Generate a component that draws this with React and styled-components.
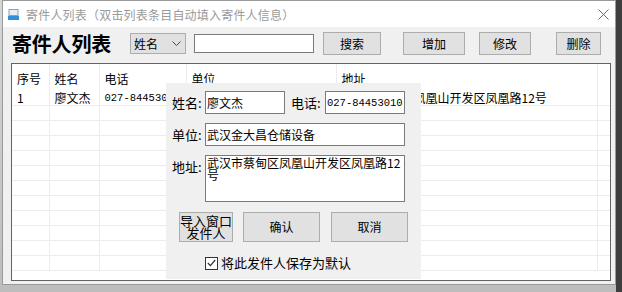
import React from 'react'
import styled, { createGlobalStyle } from 'styled-components'

const Global = createGlobalStyle`
  html, body {
    margin: 0;
    padding: 0;
    background: #cfcfcf;
    overflow: hidden;
  }
  body {
    font-family: "Noto Sans CJK SC", "Microsoft YaHei", sans-serif;
    font-size: 12px;
    color: #000;
  }
`

const mono = '"Liberation Mono", "Noto Sans CJK SC", monospace'

const Desktop = styled.div`
  width: 622px;
  height: 292px;
  display: flex;
  background: linear-gradient(#d6d6d6, #bdbdbd);
`

const Window = styled.div`
  margin-left: 2px;
  width: 614px;
  height: 285px;
  box-sizing: border-box;
  border: 1px solid #9a9a9a;
  background: #f0f0f0;
  display: flex;
  flex-direction: column;
`

const RightStrip = styled.div`
  flex: 1;
  height: 292px;
  background: #3e3e3e;
`

const TitleBar = styled.div`
  height: 26px;
  background: #fff;
  display: flex;
  align-items: center;
  padding-left: 5px;
  gap: 7px;
  color: #9a9a9a;
  font-size: 12px;
  line-height: 14px;
`

const TitleText = styled.span`
  flex: 1;
  margin-top: 1px;
  letter-spacing: 0.2px;
`

const Close = styled.svg`
  margin-right: 6px;
`

const Body = styled.div`
  flex: 1;
  display: flex;
  flex-direction: column;
  padding: 5px 4px 3px 8px;
`

const Toolbar = styled.div`
  display: flex;
  align-items: center;
  height: 23px;
`

const Heading = styled.h1`
  margin: 0 0 0 1px;
  width: 118px;
  font-size: 20px;
  font-weight: bold;
  line-height: 23px;
  letter-spacing: -0.2px;
`

const Select = styled.div`
  width: 56px;
  height: 21px;
  box-sizing: border-box;
  border: 1px solid #adadad;
  background: #e1e1e1;
  display: flex;
  align-items: center;
  justify-content: space-between;
  padding: 0 4px 0 3px;
  font-size: 12px;
`

const SearchBox = styled.div`
  margin-left: 8px;
  width: 120px;
  height: 19px;
  box-sizing: border-box;
  border: 1px solid #7a7a7a;
  background: #fff;
`

const Button = styled.button`
  margin-left: ${p => p.$ml || 0}px;
  width: ${p => p.$w}px;
  height: ${p => p.$h || 23}px;
  box-sizing: border-box;
  border: 1px solid #adadad;
  background: #e1e1e1;
  font-family: inherit;
  font-size: ${p => p.$fs || 12}px;
  line-height: ${p => p.$lh || 14}px;
  padding: 0;
  color: #000;
`

const TableWrap = styled.div`
  position: relative;
  margin-top: 8px;
  width: 600px;
  height: 218px;
  box-sizing: border-box;
  border: 1px solid #646464;
  background: #fff;
  overflow: hidden;
`

const Grid = styled.table`
  border-collapse: collapse;
  table-layout: fixed;
  width: 598px;
`

const HeadCell = styled.th`
  height: 26px;
  padding: 2px 0 0 5px;
  box-sizing: border-box;
  text-align: left;
  font-weight: normal;
  font-size: 12px;
  border-right: 1px solid #ececec;
  white-space: nowrap;
  overflow: hidden;
`

const Cell = styled.td`
  height: 15px;
  padding: 1px 0 0 5px;
  box-sizing: border-box;
  line-height: 14px;
  border-right: 1px solid #ececec;
  border-bottom: 1px solid #ececec;
  white-space: nowrap;
  overflow: hidden;
  font-family: ${p => (p.$mono ? mono : 'inherit')};
  font-size: ${p => (p.$mono ? 10.5 : 12)}px;
`

const Popup = styled.div`
  position: absolute;
  left: 154px;
  top: 19px;
  width: 255px;
  height: 196px;
  box-sizing: border-box;
  background: #f0f0f0;
  padding: 8px 0 0 6px;
  display: flex;
  flex-direction: column;
`

const FieldRow = styled.div`
  display: flex;
  align-items: ${p => (p.$top ? 'flex-start' : 'center')};
  margin-top: ${p => p.$mt || 0}px;
`

const Label = styled.label`
  width: ${p => p.$w || 33}px;
  margin-left: ${p => p.$ml || 0}px;
  margin-top: ${p => p.$mt || 0}px;
  font-size: 13px;
  line-height: 16px;
  white-space: nowrap;
`

const Field = styled.div`
  width: ${p => p.$w}px;
  height: ${p => p.$h || 23}px;
  box-sizing: border-box;
  border: 1px solid #7a7a7a;
  background: #fff;
  padding: ${p => (p.$area ? '1px 1px 0 1px' : '0 1px')};
  display: flex;
  align-items: ${p => (p.$area ? 'flex-start' : 'center')};
  font-size: ${p => (p.$mono ? 10.5 : 12)}px;
  line-height: 12px;
  font-family: ${p => (p.$mono ? mono : 'inherit')};
  white-space: ${p => (p.$area ? 'normal' : 'nowrap')};
  word-break: break-all;
  overflow: hidden;
`

const ButtonRow = styled.div`
  display: flex;
  margin: 10px 0 0 7px;
`

const CheckRow = styled.div`
  display: flex;
  align-items: center;
  gap: 3px;
  margin: 14px 0 0 33px;
  font-size: 13px;
  line-height: 14px;
`

const Box = styled.span`
  width: 11px;
  height: 11px;
  border: 1px solid #333;
  background: #fff;
  display: flex;
  align-items: center;
  justify-content: center;
`

const columns = [
  { title: '序号', w: 37 },
  { title: '姓名', w: 50 },
  { title: '电话', w: 87 },
  { title: '单位', w: 150 },
  { title: '地址', w: 261 },
  { title: '', w: 13 },
]

const rows = [
  ['1', '廖文杰', '027-84453010', '武汉金大昌仓储设备', '武汉市蔡甸区凤凰山开发区凤凰路12号', ''],
]
while (rows.length < 12) rows.push(['', '', '', '', '', ''])

function AppIcon() {
  return (
    <svg width="11" height="11" viewBox="0 0 11 11">
      <rect x="1" y="0.5" width="9" height="6" fill="#e9eef3" stroke="#8aa0b6" />
      <rect x="0" y="7" width="11" height="4" fill="#2f8fd8" />
    </svg>
  )
}

export default function App() {
  return (
    <Desktop>
      <Global />
      <Window>
        <TitleBar>
          <AppIcon />
          <TitleText>寄件人列表（双击列表条目自动填入寄件人信息）</TitleText>
          <Close width="11" height="11" viewBox="0 0 11 11">
            <path d="M0.5 0.5 L10.5 10.5 M10.5 0.5 L0.5 10.5" stroke="#6a6a6a" strokeWidth="1" />
          </Close>
        </TitleBar>
        <Body>
          <Toolbar>
            <Heading>寄件人列表</Heading>
            <Select>
              <span>姓名</span>
              <svg width="9" height="6" viewBox="0 0 9 6">
                <path d="M0.5 0.5 L4.5 4.5 L8.5 0.5" fill="none" stroke="#444" />
              </svg>
            </Select>
            <SearchBox />
            <Button $ml={9} $w={58}>搜索</Button>
            <Button $ml={22} $w={62}>增加</Button>
            <Button $ml={14} $w={52}>修改</Button>
            <Button $ml={25} $w={45}>删除</Button>
          </Toolbar>
          <TableWrap>
            <Grid>
              <colgroup>
                {columns.map((c, i) => (
                  <col key={i} style={{ width: c.w }} />
                ))}
              </colgroup>
              <thead>
                <tr>
                  {columns.map((c, i) => (
                    <HeadCell key={i}>{c.title}</HeadCell>
                  ))}
                </tr>
              </thead>
              <tbody>
                {rows.map((r, i) => (
                  <tr key={i}>
                    {r.map((v, j) => (
                      <Cell key={j} $mono={j === 2}>{v}</Cell>
                    ))}
                  </tr>
                ))}
              </tbody>
            </Grid>
            <Popup>
              <FieldRow>
                <Label>姓名:</Label>
                <Field $w={80}>廖文杰</Field>
                <Label $ml={6} $w={34}>电话:</Label>
                <Field $w={80} $mono>027-84453010</Field>
              </FieldRow>
              <FieldRow $mt={9}>
                <Label>单位:</Label>
                <Field $w={200}>武汉金大昌仓储设备</Field>
              </FieldRow>
              <FieldRow $mt={9} $top>
                <Label $mt={4}>地址:</Label>
                <Field $w={200} $h={47} $area>武汉市蔡甸区凤凰山开发区凤凰路12号</Field>
              </FieldRow>
              <ButtonRow>
                <Button $w={54} $h={30} $lh={12} $fs={13}>导入窗口<br />发件人</Button>
                <Button $ml={10} $w={77} $h={30}>确认</Button>
                <Button $ml={11} $w={77} $h={30}>取消</Button>
              </ButtonRow>
              <CheckRow>
                <Box>
                  <svg width="9" height="8" viewBox="0 0 9 8">
                    <path d="M0.8 4 L3.4 6.6 L8.2 1" fill="none" stroke="#333" strokeWidth="1.2" />
                  </svg>
                </Box>
                <span>将此发件人保存为默认</span>
              </CheckRow>
            </Popup>
          </TableWrap>
        </Body>
      </Window>
      <RightStrip />
    </Desktop>
  )
}
